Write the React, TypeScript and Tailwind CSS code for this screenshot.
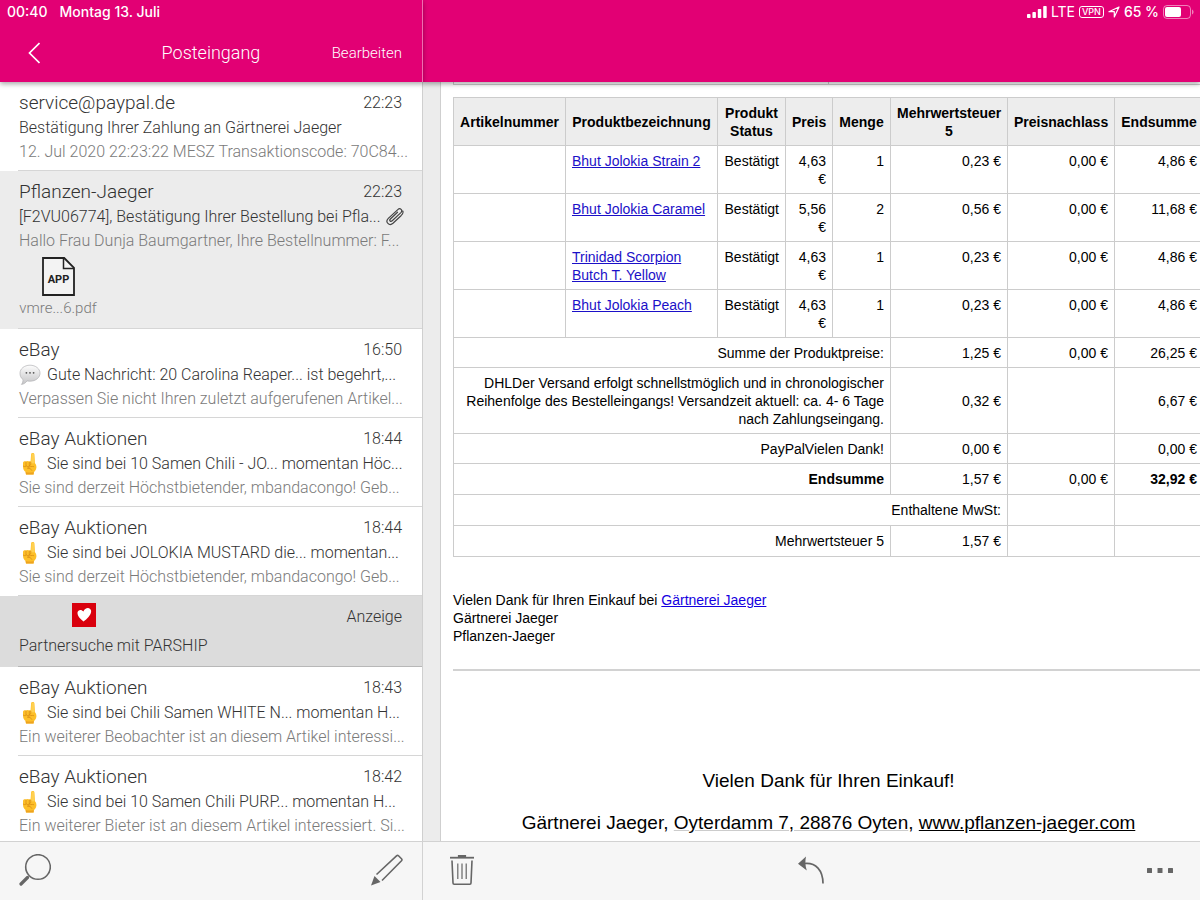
import type { ReactNode } from "react";

type Emoji = "bubble" | "finger";

type Mail = {
  sender: string;
  time: string;
  subject: string;
  preview: string;
  emoji?: Emoji;
  attachment?: string;
  selected?: boolean;
};

const mailsBeforeAd: Mail[] = [
  {
    sender: "service@paypal.de",
    time: "22:23",
    subject: "Bestätigung Ihrer Zahlung an Gärtnerei Jaeger",
    preview: "12. Jul 2020 22:23:22 MESZ Transaktionscode: 70C84...",
  },
  {
    sender: "Pflanzen-Jaeger",
    time: "22:23",
    subject: "[F2VU06774], Bestätigung Ihrer Bestellung bei Pfla...",
    preview: "Hallo Frau Dunja Baumgartner, Ihre Bestellnummer: F...",
    attachment: "vmre...6.pdf",
    selected: true,
  },
  {
    sender: "eBay",
    time: "16:50",
    subject: "Gute Nachricht: 20 Carolina Reaper... ist begehrt,...",
    preview: "Verpassen Sie nicht Ihren zuletzt aufgerufenen Artikel...",
    emoji: "bubble",
  },
  {
    sender: "eBay Auktionen",
    time: "18:44",
    subject: "Sie sind bei 10 Samen Chili - JO... momentan Höc...",
    preview: "Sie sind derzeit Höchstbietender, mbandacongo! Geb...",
    emoji: "finger",
  },
  {
    sender: "eBay Auktionen",
    time: "18:44",
    subject: "Sie sind bei JOLOKIA MUSTARD die... momentan...",
    preview: "Sie sind derzeit Höchstbietender, mbandacongo! Geb...",
    emoji: "finger",
  },
];

const mailsAfterAd: Mail[] = [
  {
    sender: "eBay Auktionen",
    time: "18:43",
    subject: "Sie sind bei Chili Samen WHITE N... momentan H...",
    preview: "Ein weiterer Beobachter ist an diesem Artikel interessi...",
    emoji: "finger",
  },
  {
    sender: "eBay Auktionen",
    time: "18:42",
    subject: "Sie sind bei 10 Samen Chili PURP... momentan H...",
    preview: "Ein weiterer Bieter ist an diesem Artikel interessiert. Si...",
    emoji: "finger",
  },
];

const products = [
  { name: "Bhut Jolokia Strain 2", price: "4,63 €", qty: 1, tax: "0,23 €", total: "4,86 €" },
  { name: "Bhut Jolokia Caramel", price: "5,56 €", qty: 2, tax: "0,56 €", total: "11,68 €" },
  { name: "Trinidad Scorpion Butch T. Yellow", price: "4,63 €", qty: 1, tax: "0,23 €", total: "4,86 €" },
  { name: "Bhut Jolokia Peach", price: "4,63 €", qty: 1, tax: "0,23 €", total: "4,86 €" },
];

function BubbleIcon() {
  return (
    <svg className="mr-[2px] h-[22px] w-[22px] shrink-0" viewBox="0 0 22 22" aria-hidden="true">
      <defs>
        <linearGradient id="bubble" x1="0" y1="0" x2="0" y2="1">
          <stop offset="0" stopColor="#fdfdfd" />
          <stop offset="1" stopColor="#c4c4c6" />
        </linearGradient>
      </defs>
      <path
        d="M11 1.2c5.6 0 10 3.5 10 8s-4.400 8-10 8c-1 0-2-.1-3-.3-1.300 1.800-3 3.300-5.600 3.500 1.200-1.300 1.700-3 1.600-4.800C2 14.100 1 11.900 1 9.200c0-4.500 4.400-8 10-8z"
        fill="url(#bubble)"
        stroke="#b2b2b5"
        strokeWidth="0.7"
      />
      <circle cx="7.400" cy="8.800" r="0.900" fill="#555" />
      <circle cx="11" cy="8.800" r="0.900" fill="#555" />
      <circle cx="14.600" cy="8.800" r="0.900" fill="#555" />
    </svg>
  );
}

function FingerIcon() {
  return (
    <svg className="mr-[2px] h-[22px] w-[22px] shrink-0" viewBox="0 0 22 22" aria-hidden="true">
      <path
        d="M4 10c0-1.600 1.700-2.200 3-1.500.9-.8 2.300-.8 3.200 0 .5-.3 1-.3 1.400-.2l.5-7c.1-1.900 3.100-1.900 3.300 0l.5 8.700c1 1.200 1.600 2.700 1.500 4.400-.2 2.600-1.700 3.600-2.600 4.800l-.2 2.300H7l-.4-2.500C4.900 17.800 4 16 4 13.500z"
        fill="#fdbf28"
      />
      <path d="M12.500 1.600c0-1.500 2.400-1.500 2.500 0l.5 8.600-3.500.3z" fill="#ffd050" />
      <path d="M6.600 18.900c2.700.9 5.500.9 8.200 0l-.2 2.600H7z" fill="#eda320" />
      <path
        d="M4.300 13.100c1 .8 2.200.8 2.900-.2.900 1 2.500 1 3.200-.1M7 9.100v3.600M10.300 9.100v3.400M8.500 15c1.500-1.500 4.500-1.900 6.200-1.400M11.800 9.300c.2 1.600 0 2.800-1.100 3.600M9 15.300c1.700-.1 3.200.6 3.800 2"
        fill="none"
        stroke="#d48612"
        strokeWidth="0.7"
        strokeLinecap="round"
      />
    </svg>
  );
}

function PaperclipIcon() {
  return (
    <svg
      className="h-5 w-5 shrink-0 text-[#444]"
      viewBox="0 0 20 20"
      fill="none"
      stroke="currentColor"
      strokeWidth="1.200"
      strokeLinecap="round"
      aria-hidden="true"
    >
      <path d="M12.500 5.200 5.400 12c-1.500 1.500.2 3.300 1.800 1.800l8.700-8.200c2.300-2.300-.7-5.200-3.100-3L3.300 11.400c-3.600 3.600 1 8.200 4.700 4.900l8-7.600c1.600-1.600 2.600-3.200 1.800-4.600" />
    </svg>
  );
}

function FileIcon() {
  return (
    <svg className="h-[39px] w-[33px]" viewBox="0 0 33 39" aria-hidden="true">
      <path d="M1 1h21.200l9.800 9.900v27.100H1z" fill="#f3f3f3" stroke="#222" strokeWidth="1.800" />
      <path d="M21.500 1v10.500H32" fill="none" stroke="#222" strokeWidth="1.500" />
      <text
        x="16.500"
        y="26"
        textAnchor="middle"
        fontFamily="Roboto, sans-serif"
        fontSize="11"
        fontWeight="700"
        fill="#222"
      >
        APP
      </text>
    </svg>
  );
}

function MailRow({ mail }: { mail: Mail }) {
  return (
    <li className={mail.selected ? "bg-[#ececec] pl-[18px]" : "bg-white pl-[18px]"}>
      <div className="border-b border-[#d6d6d6] pt-2 pr-3 pb-[6px] pl-px">
        <div className="flex justify-between pr-2 pb-px leading-[25px] text-[#333]">
          <span className="text-[19px]">{mail.sender}</span>
          <time className="text-base leading-[25px]">{mail.time}</time>
        </div>
        <div className="flex items-center gap-1 pr-1 text-base leading-6 text-[#333]">
          {mail.emoji === "bubble" && <BubbleIcon />}
          {mail.emoji === "finger" && <FingerIcon />}
          <span className="whitespace-nowrap">{mail.subject}</span>
          {mail.attachment && <PaperclipIcon />}
        </div>
        <p className="text-base leading-6 whitespace-nowrap text-[#7a7a7a]">{mail.preview}</p>
        {mail.attachment && (
          <div className="flex w-[78px] flex-col items-center gap-[2px] py-1">
            <FileIcon />
            <span className="text-[15px] leading-5 text-[#7a7a7a]">{mail.attachment}</span>
          </div>
        )}
      </div>
    </li>
  );
}

function AdRow() {
  return (
    <li className="bg-[#dcdcdc] pl-[18px]">
      <a href="#anzeige" className="block border-b border-[#b8b8b8] pt-[7px] pr-5 pb-2 pl-px text-base text-[#333]">
        <span className="flex items-start justify-between">
          <svg className="ml-[53px] h-6 w-6" viewBox="0 0 24 24" aria-hidden="true">
            <path fill="#d9000d" d="M0 0h24v24H0z" />
            <path
              d="M11.500 18.500C8.500 16 5.200 13 5.500 9.500c.4-2.800 4-3.700 5.900-.9 1.100-3 4.500-4.500 6.700-2.700 2.300 2 .5 5.500-1.600 8-1.500 1.900-3.300 3.400-5 4.600z"
              fill="#fff"
            />
          </svg>
          <span className="leading-7">Anzeige</span>
        </span>
        <span className="block pt-[3px] leading-6">Partnersuche mit PARSHIP</span>
      </a>
    </li>
  );
}

function StatusIcons() {
  return (
    <div className="flex h-6 items-center justify-end gap-1 pr-[6px] font-[Inter,sans-serif] text-sm font-medium">
      <svg className="h-3 w-5" viewBox="0 0 20 12" fill="currentColor" aria-hidden="true">
        <rect x="0" y="8" width="3.500" height="4" rx="0.800" />
        <rect x="5.400" y="6" width="3.500" height="6" rx="0.800" />
        <rect x="10.800" y="3" width="3.500" height="9" rx="0.800" />
        <rect x="16.200" y="0" width="3.500" height="12" rx="0.800" />
      </svg>
      <span className="font-normal">LTE</span>
      <span className="rounded-[3px] border border-white px-[2px] text-[9px] leading-[10px]">VPN</span>
      <svg className="h-3 w-3" viewBox="0 0 12 12" fill="none" stroke="currentColor" strokeWidth="1.200" strokeLinejoin="round" aria-hidden="true">
        <path d="M11 1 .9 5.700h5.400V11z" />
      </svg>
      <span className="whitespace-nowrap">65 %</span>
      <svg className="h-[14px] w-[31px]" viewBox="0 0 31 14" aria-hidden="true">
        <rect x="0.500" y="0.500" width="27" height="13" rx="3.500" fill="none" stroke="#fff" strokeOpacity="0.500" />
        <rect x="2" y="2" width="16" height="10" rx="2" fill="#fff" />
        <path d="M29 4.500c2 .8 2 4.200 0 5z" fill="#fff" fillOpacity="0.500" />
      </svg>
    </div>
  );
}

function ToolButton({ label, children }: { label: string; children: ReactNode }) {
  return (
    <button type="button" aria-label={label} className="text-[#666]">
      {children}
    </button>
  );
}

function Inbox() {
  return (
    <section className="flex w-[423px] shrink-0 flex-col font-[Roboto,sans-serif] font-light">
      <header className="relative z-20 h-[82px] shrink-0 border-r border-[#f06db0] bg-[#e20074] text-white shadow-[0_2px_5px_rgba(0,0,0,0.35)]">
        <div className="flex h-6 items-center gap-3 pl-[7px] font-[Inter,sans-serif] text-sm font-medium">
          <time>00:40</time>
          <span>Montag 13. Juli</span>
        </div>
        <div className="grid h-[58px] grid-cols-[1fr_auto_1fr] items-center px-5">
          <button type="button" aria-label="Zurück" className="justify-self-start pl-2">
            <svg className="h-[22px] w-3" viewBox="0 0 12 22" fill="none" stroke="currentColor" strokeWidth="1.700" aria-hidden="true">
              <path d="M11.500 1 1.500 11l10 10" />
            </svg>
          </button>
          <h1 className="text-lg">Posteingang</h1>
          <button type="button" className="justify-self-end text-[15px]">
            Bearbeiten
          </button>
        </div>
      </header>

      <ul className="min-h-0 flex-1 overflow-hidden border-r border-[#cfcfcf]">
        {mailsBeforeAd.map((mail, i) => (
          <MailRow key={i} mail={mail} />
        ))}
        <AdRow />
        {mailsAfterAd.map((mail, i) => (
          <MailRow key={i} mail={mail} />
        ))}
      </ul>

      <footer className="flex h-[59px] shrink-0 items-center justify-between border-t border-r border-[#d2d2d2] bg-[#f6f6f6] px-[19px] pb-[2px]">
        <ToolButton label="Suchen">
          <svg className="h-8 w-8" viewBox="0 0 32 32" fill="none" stroke="currentColor" aria-hidden="true">
            <circle cx="19" cy="13" r="12.300" strokeWidth="1.600" />
            <path d="M8.500 23.500 2 30" strokeWidth="3.200" strokeLinecap="round" />
          </svg>
        </ToolButton>
        <ToolButton label="Neue E-Mail">
          <svg className="h-8 w-8" viewBox="0 0 32 32" fill="none" stroke="currentColor" strokeWidth="1.600" aria-hidden="true">
            <path d="M5.500 20.500 25.500 1.800c.8-.7 1.400-.6 2 0l3 3c.6.600.6 1.300 0 2L11 26.500" />
            <path d="M3.500 22 0 31.500l9.500-3.500z" fill="currentColor" stroke="none" />
          </svg>
        </ToolButton>
      </footer>
    </section>
  );
}

const cell = "border border-[#ccc] px-[6px] pt-[6px] pb-[5px]";
const taxCell = "border border-[#ccc] p-[6px]";

function OrderTable() {
  return (
    <table className="w-[751px] table-fixed border-collapse text-right text-sm leading-[18px]">
      <colgroup>
        <col className="w-[112px]" />
        <col className="w-[152px]" />
        <col className="w-[68px]" />
        <col className="w-[47px]" />
        <col className="w-[58px]" />
        <col className="w-[117px]" />
        <col className="w-[107px]" />
        <col />
      </colgroup>
      <thead>
        <tr className="bg-[#ededed] text-center">
          <th className={cell}>Artikelnummer</th>
          <th className={cell}>Produktbezeichnung</th>
          <th className={cell}>Produkt Status</th>
          <th className={cell}>Preis</th>
          <th className={cell}>Menge</th>
          <th className={cell}>Mehrwertsteuer 5</th>
          <th className={cell}>Preisnachlass</th>
          <th className={cell}>Endsumme</th>
        </tr>
      </thead>
      <tbody className="align-top">
        {products.map((p) => (
          <tr key={p.name}>
            <td className={cell} />
            <td className="border border-[#ccc] px-[6px] pt-[6px] pb-[5px] text-left">
              <a href="#produkt" className="text-[#1b10c8] underline">
                {p.name}
              </a>
            </td>
            <td className={cell}>Bestätigt</td>
            <td className={cell}>{p.price}</td>
            <td className={cell}>{p.qty}</td>
            <td className={cell}>{p.tax}</td>
            <td className={cell}>0,00 €</td>
            <td className={cell}>{p.total}</td>
          </tr>
        ))}
      </tbody>
      <tbody>
        <tr>
          <td colSpan={5} className={cell}>Summe der Produktpreise:</td>
          <td className={cell}>1,25 €</td>
          <td className={cell}>0,00 €</td>
          <td className={cell}>26,25 €</td>
        </tr>
        <tr>
          <td colSpan={5} className={cell}>
            DHLDer Versand erfolgt schnellstmöglich und in chronologischer Reihenfolge des Bestelleingangs! Versandzeit
            aktuell: ca. 4- 6 Tage nach Zahlungseingang.
          </td>
          <td className={cell}>0,32 €</td>
          <td className={cell} />
          <td className={cell}>6,67 €</td>
        </tr>
        <tr>
          <td colSpan={5} className={cell}>PayPalVielen Dank!</td>
          <td className={cell}>0,00 €</td>
          <td className={cell} />
          <td className={cell}>0,00 €</td>
        </tr>
        <tr>
          <th colSpan={5} className={taxCell}>Endsumme</th>
          <td className={taxCell}>1,57 €</td>
          <td className={taxCell}>0,00 €</td>
          <td className={taxCell}>
            <b>32,92 €</b>
          </td>
        </tr>
        <tr>
          <td colSpan={6} className={taxCell}>Enthaltene MwSt:</td>
          <td className={taxCell} />
          <td className={taxCell} />
        </tr>
        <tr>
          <td colSpan={5} className={taxCell}>Mehrwertsteuer 5</td>
          <td className={taxCell}>1,57 €</td>
          <td className={taxCell} />
          <td className={taxCell} />
        </tr>
      </tbody>
    </table>
  );
}

function Reader() {
  return (
    <section className="flex min-w-0 flex-1 flex-col font-['Liberation_Sans',Arial,sans-serif] text-black">
      <header className="relative z-10 h-[82px] shrink-0 bg-[#e20074] text-white shadow-[0_2px_5px_rgba(0,0,0,0.35)]">
        <StatusIcons />
      </header>

      <main className="min-h-0 flex-1 overflow-hidden bg-[#ececec] pl-[17px]">
        <article className="h-full overflow-hidden border-l border-[#cfcfcf] bg-white pl-3">
          {/* tail of the address table above */}
          <div className="grid h-[3px] w-[751px] grid-cols-2 border-x border-b border-[#ccc]">
            <div className="border-r border-[#ccc]" />
          </div>
          <div className="pt-3">
            <OrderTable />
          </div>
          <div className="pt-[34px] text-sm leading-[18px]">
            <p>
              Vielen Dank für Ihren Einkauf bei{" "}
              <a href="#shop" className="text-[#1400e0] underline">
                Gärtnerei Jaeger
              </a>
            </p>
            <p>Gärtnerei Jaeger</p>
            <p>Pflanzen-Jaeger</p>
          </div>
          <hr className="mt-6 border-t-2 border-[#d2d2d2]" />
          <div className="flex w-[751px] flex-col gap-[18px] pt-[98px] text-center text-[19px] leading-6">
            <p>Vielen Dank für Ihren Einkauf!</p>
            <p>
              Gärtnerei Jaeger,{" "}
              <a href="#karte" className="underline decoration-[#ccc]">
                Oyterdamm 7, 28876 Oyten
              </a>
              ,{" "}
              <a href="#web" className="underline">
                www.pflanzen-jaeger.com
              </a>
            </p>
          </div>
        </article>
      </main>

      <footer className="flex h-[59px] shrink-0 items-center justify-between border-t border-[#d2d2d2] bg-[#f6f6f6] px-[27px] pb-[2px]">
        <ToolButton label="Löschen">
          <svg className="h-[30px] w-6" viewBox="0 0 24 30" fill="none" stroke="currentColor" aria-hidden="true">
            <path d="M0 2.700h24" strokeWidth="1.800" />
            <path d="M8.500 2V.6h7V2" strokeWidth="1.200" fill="currentColor" />
            <path d="M2 5.500 3 28c0 .8.500 1.200 1.200 1.200h15.600c.7 0 1.200-.4 1.200-1.200l1-22.500" strokeWidth="1.600" />
            <path d="M7.800 8.500v15.500M12 8.500v15.500M16.200 8.500v15.500" strokeWidth="1.200" />
          </svg>
        </ToolButton>
        <ToolButton label="Antworten">
          <svg className="h-7 w-[26px]" viewBox="0 0 26 28" aria-hidden="true">
            <path d="M6 7.500c12-1.500 19 7 19 20" fill="none" stroke="currentColor" strokeWidth="1.700" />
            <path d="M0 7.800 8 .6c-1 4.800-.8 9.400.8 14z" fill="currentColor" />
          </svg>
        </ToolButton>
        <ToolButton label="Mehr">
          <svg className="h-[5px] w-[26px]" viewBox="0 0 26 5" fill="currentColor" aria-hidden="true">
            <rect width="5" height="5" rx="0.500" />
            <rect x="10.500" width="5" height="5" rx="0.500" />
            <rect x="21" width="5" height="5" rx="0.500" />
          </svg>
        </ToolButton>
      </footer>
    </section>
  );
}

export default function App() {
  return (
    <div className="flex h-screen overflow-hidden bg-white">
      <Inbox />
      <Reader />
    </div>
  );
}
